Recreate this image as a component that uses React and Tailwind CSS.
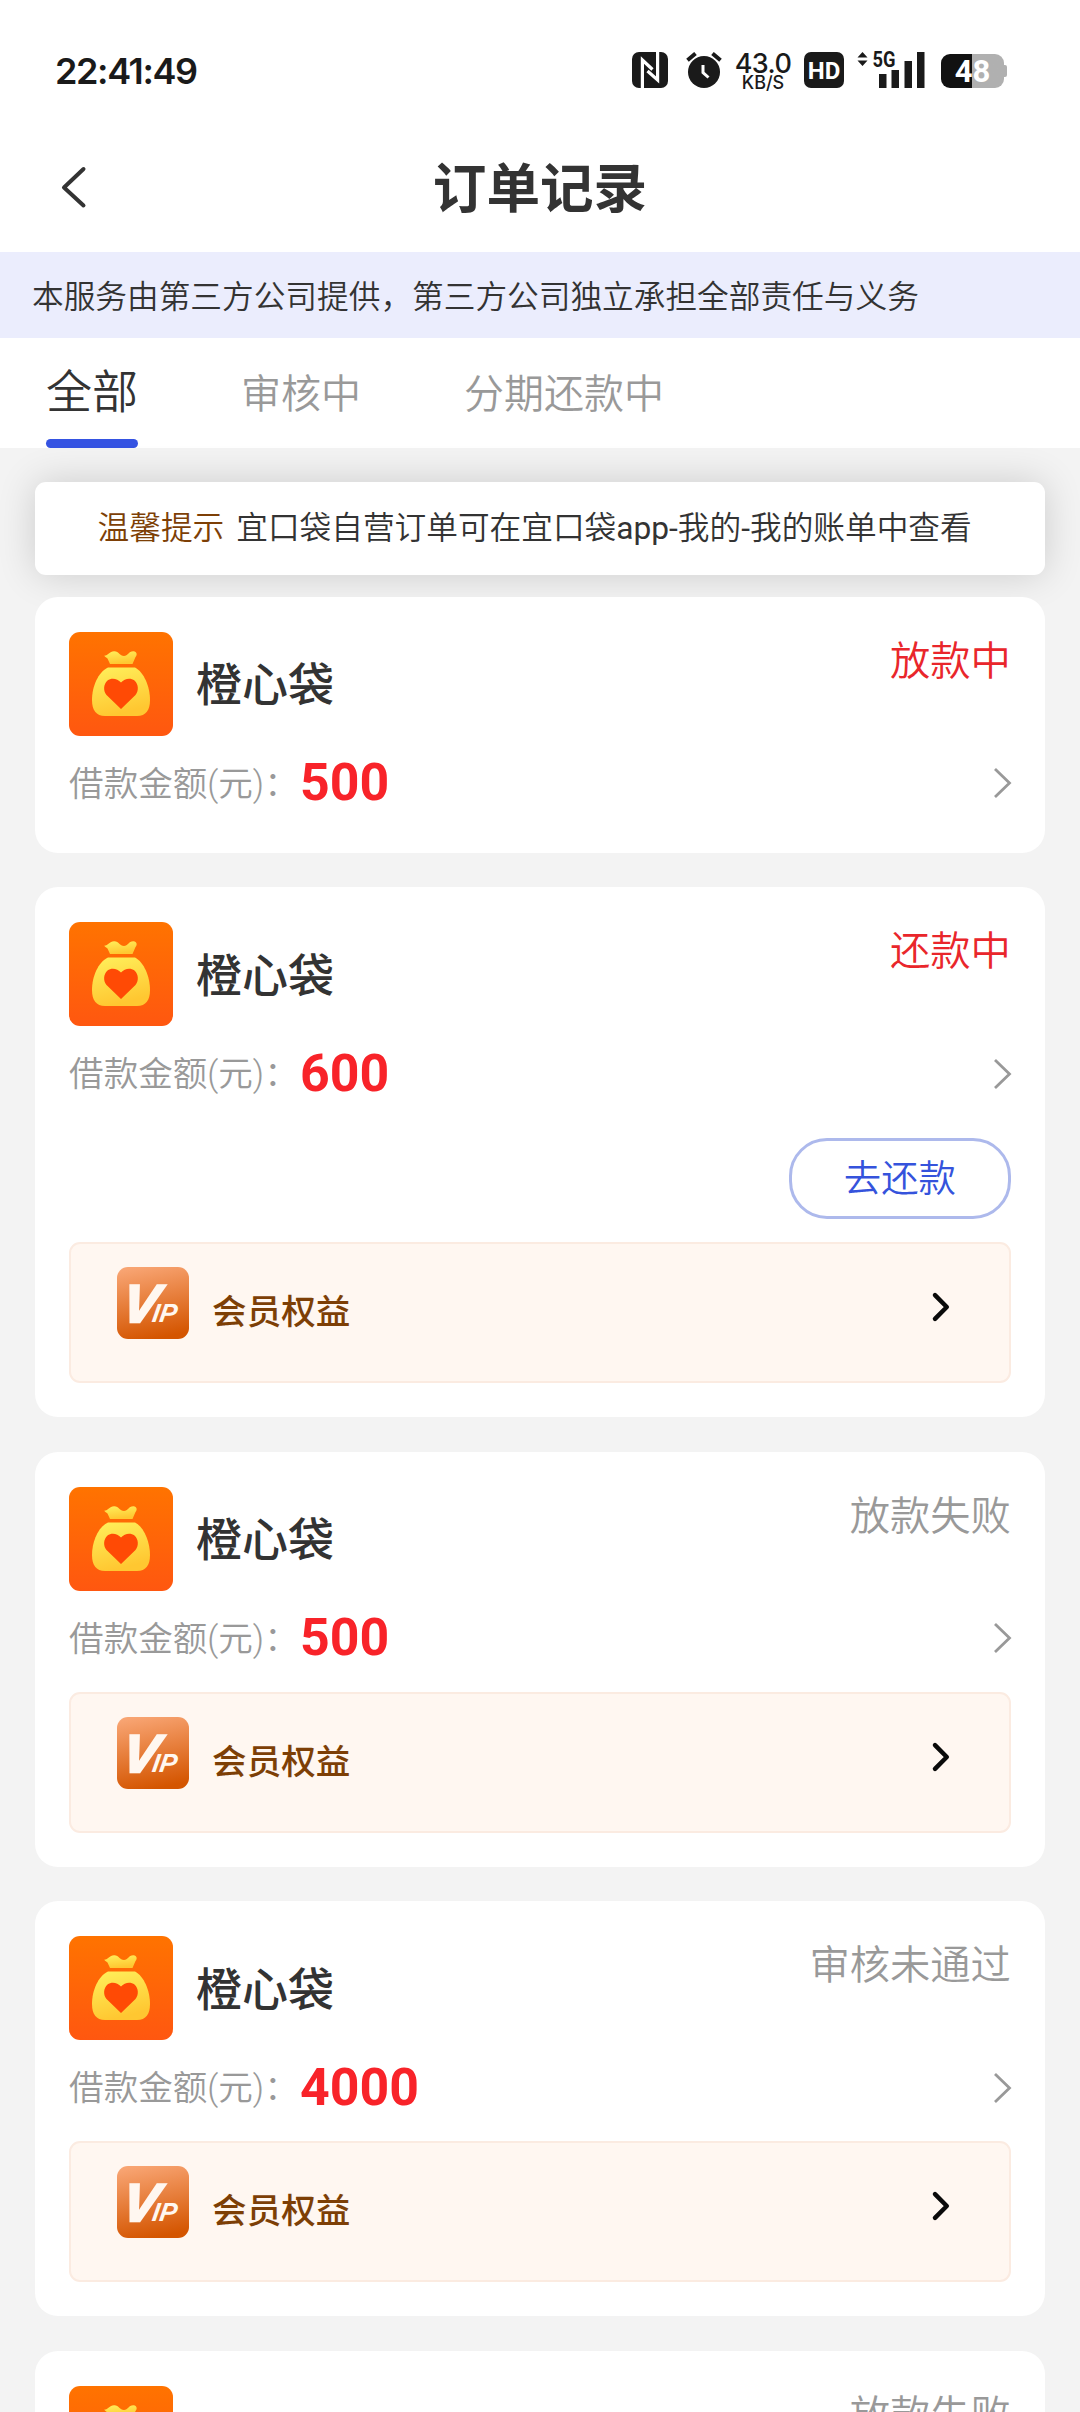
import clsx from "clsx";

const tabs = [
    { label: "全部", active: true },
    { label: "审核中" },
    { label: "分期还款中" },
];

const orders = [
    { id: 1, name: "橙心袋", amount: 500, status: "放款中", highlight: true },
    { id: 2, name: "橙心袋", amount: 600, status: "还款中", highlight: true, repay: true, vip: true },
    { id: 3, name: "橙心袋", amount: 500, status: "放款失败", vip: true },
    { id: 4, name: "橙心袋", amount: 4000, status: "审核未通过", vip: true },
    { id: 5, name: "橙心袋", amount: 500, status: "放款失败", vip: true },
];

function NfcIcon() {
    return (
        <svg width="36" height="36" viewBox="0 0 36 36" className="shrink-0">
            <rect width="36" height="36" rx="7" fill="#1a1a1a" />
            <path d="M10.4 36V8L20.5 17.5M25.6 0V28L15.5 19" fill="none" stroke="#fff" strokeWidth="3.2" />
        </svg>
    );
}

function AlarmIcon() {
    return (
        <svg width="36" height="36" viewBox="0 0 36 36" className="shrink-0">
            <circle cx="18" cy="20" r="16" fill="#1a1a1a" />
            <path d="M1.5 8.2L9.5 1.5M34.5 8.2L26.5 1.5" stroke="#1a1a1a" strokeWidth="4" />
            <path d="M17 13V20.5L22.5 25.5" fill="none" stroke="#fff" strokeWidth="3" />
        </svg>
    );
}

function SignalIcon() {
    return (
        <svg width="68" height="42" viewBox="0 -6 68 42" className="shrink-0">
            <path d="M0.5 5.5L5.5 0L10.5 5.5ZM0.5 8.5L5.5 14L10.5 8.5Z" fill="#1a1a1a" />
            <text x="15.5" y="15" fontSize="21.5" fontWeight="700" textLength="23" lengthAdjust="spacingAndGlyphs" fill="#1a1a1a" fontFamily="Roboto">5G</text>
            <path d="M22 22h7.5v14h-7.5zM34.5 18h7.5v18h-7.5zM47.5 9h7.5v27h-7.5zM60 0h7.5v36h-7.5z" fill="#1a1a1a" />
        </svg>
    );
}

function Battery() {
    return (
        <div className="flex items-center">
            <div className="flex h-[34px] w-[63px] items-center justify-center rounded-[9px] bg-linear-to-r from-[#111] from-50% to-[#b0b0b0] to-50%">
                <span className="text-[31px] leading-none font-bold text-white">48</span>
            </div>
            <div className="h-[12px] w-[3px] rounded-r-[2px] bg-[#b0b0b0]" />
        </div>
    );
}

function StatusBar() {
    return (
        <div className="flex h-[92px] items-end justify-between pr-[73px] pl-[55px] text-[#1a1a1a]">
            <span className="mb-[-1px] font-['Inter'] text-[36px] leading-[44px] font-semibold tracking-[-1.4px]">22:41:49</span>
            <div className="flex h-[40px] items-start">
                <NfcIcon />
                <div className="ml-[18px]"><AlarmIcon /></div>
                <div className="mt-[1px] ml-[13px] flex w-[56px] flex-col items-center font-['Inter'] font-medium">
                    <span className="text-[27px] leading-[22px] tracking-[-0.6px]">43.0</span>
                    <span className="text-[18px] leading-[15px]">KB/S</span>
                </div>
                <div className="ml-[13px] flex h-[36px] w-[40px] items-center justify-center rounded-[7px] bg-[#1a1a1a] pt-[2px]">
                    <span className="text-[24px] leading-none font-bold text-white">HD</span>
                </div>
                <div className="mt-[-6px] ml-[13px]"><SignalIcon /></div>
                <div className="mt-[2px] ml-[16px]"><Battery /></div>
            </div>
        </div>
    );
}

function Header() {
    return (
        <div className="grid h-[160px] grid-cols-[1fr_auto_1fr] items-center px-[60px]">
            <svg width="28" height="44" viewBox="0 0 28 44" fill="none" stroke="#333" strokeWidth="4" strokeLinecap="round" strokeLinejoin="round" className="mt-[30px]">
                <path d="M23.5 4L4 22.5L23.5 40.5" />
            </svg>
            <h1 className="mt-[36px] text-[53.6px] leading-none font-bold text-[#333]">订单记录</h1>
        </div>
    );
}

function Tabs() {
    return (
        <div className="flex h-[110px] gap-[103px] bg-white pl-[46px]">
            {tabs.map((tab) => (
                <div key={tab.label} className="flex flex-col justify-between">
                    <span className={clsx("flex h-[101px] items-center", tab.active ? "pt-[7px] text-[46px] text-[#333]" : "pt-[12px] text-[40px] text-[#999]")}>{tab.label}</span>
                    {tab.active && <div className="h-[9px] rounded-full bg-[#3553e2]" />}
                </div>
            ))}
        </div>
    );
}

function OrderLogo() {
    return (
        <svg width="104" height="104" viewBox="0 0 104 104" className="shrink-0">
            <defs>
                <linearGradient id="logoBg" x1="0" y1="0" x2="0" y2="1">
                    <stop offset="0" stopColor="#ff7300" />
                    <stop offset="1" stopColor="#ff5710" />
                </linearGradient>
                <linearGradient id="bag" x1="0" y1="0" x2="0.3" y2="1">
                    <stop offset="0" stopColor="#fff05c" />
                    <stop offset="1" stopColor="#ffc731" />
                </linearGradient>
            </defs>
            <rect width="104" height="104" rx="11" fill="url(#logoBg)" />
            <path d="M35.5 23.5C39 23.5 40.5 19.5 45 19.2C50 19 50.5 24 55 24C59 24 59.5 19 64.5 19.2C68 19.5 68.5 23 66.5 25L63.5 32H41L38.5 26.5C37.5 25.5 35 24.5 35.5 23.5Z" fill="url(#bag)" />
            <path d="M39 35.5H66C75 40 81 55 81 68C81 78 77 84 68 84H36C27 84 23 78 23 68C23 55 29 40 39 35.5Z" fill="url(#bag)" />
            <path d="M52 77L37.5 63C34 59 34.5 52 38.5 48.5C42.5 45.5 48.5 46.5 52 50.5C55.5 46.5 61.5 45.5 65.5 48.5C69.5 52 70 59 66.5 63Z" fill="#ff4a05" />
        </svg>
    );
}

function VipIcon() {
    return (
        <svg width="72" height="72" viewBox="0 0 72 72" className="shrink-0">
            <defs>
                <linearGradient id="vipBg" x1="0.3" y1="0" x2="0.5" y2="1">
                    <stop offset="0" stopColor="#f8a472" />
                    <stop offset="1" stopColor="#d45500" />
                </linearGradient>
            </defs>
            <rect width="72" height="72" rx="11" fill="url(#vipBg)" />
            <text transform="translate(3.5 54.5) skewX(-9)" fontSize="53" fontWeight="700" fontStyle="italic" fontFamily="Liberation Sans" fill="#fff7f0">
                <tspan stroke="#fff7f0" strokeWidth="2.5">V</tspan>
                <tspan dx="-4.5" fontSize="26">IP</tspan>
            </text>
        </svg>
    );
}

function VipBanner() {
    return (
        <div className="flex h-[141px] items-start rounded-[11px] border-2 border-[#fbebe1] bg-[#fff7f1] pt-[23px] pr-[58px] pl-[46px]">
            <VipIcon />
            <span className="mt-[21px] ml-[23px] text-[34.56px] leading-[48px] font-medium text-[#7d3f06]">会员权益</span>
            <svg width="20" height="32" viewBox="0 0 20 32" fill="none" stroke="#0a0a0a" strokeWidth="4.5" strokeLinecap="round" strokeLinejoin="round" className="mt-[24px] ml-auto">
                <path d="M4 4.2L15.8 16L4 27.8" />
            </svg>
        </div>
    );
}

function OrderCard({ order }) {
    return (
        <div className="rounded-[23px] bg-white px-[34.56px] pt-[35px] pb-[34px]">
            <div className="flex h-[104px] items-center">
                <OrderLogo />
                <span className="mt-[3px] ml-[23px] text-[46px] leading-none font-medium text-[#333]">{order.name}</span>
                <span className={clsx("mt-[8px] ml-auto self-start text-[40.3px] leading-[44px]", order.highlight ? "text-[#e9262b]" : "text-[#999]")}>{order.status}</span>
            </div>
            <div className={clsx("flex h-[95px] items-center", !order.vip && "mb-[-12px]")}>
                <span className="w-[231px] pt-[3px] text-[34.56px] whitespace-nowrap text-[#999]">借款金额(元)：</span>
                <span className="text-[51.84px] leading-none font-bold text-[#f82329]">{order.amount}</span>
                <svg width="20" height="32" viewBox="0 0 20 32" fill="none" stroke="#999" strokeWidth="2.8" className="mr-[-2px] ml-auto">
                    <path d="M2 2L16.5 16L2 30" />
                </svg>
            </div>
            {order.repay && (
                <div className="mt-[17px] mb-[23px] flex justify-end">
                    <button className="h-[81px] w-[222px] rounded-[38px] border-3 border-[#adb9ec] pt-[2px] text-[37.4px] leading-none font-[350] text-[#3553dc]">去还款</button>
                </div>
            )}
            {order.vip && <div className="mt-[6px]"><VipBanner /></div>}
        </div>
    );
}

export default function App() {
    return (
        <div className="h-[2412px] w-[1080px] overflow-hidden bg-[#f3f3f3] font-['Roboto','Noto_Sans_CJK_SC',sans-serif] font-[350]">
            <div className="bg-white">
                <StatusBar />
                <Header />
            </div>
            <div className="flex h-[86px] items-center bg-[#ebedfd] pt-[5px] pl-[32px] text-[31.68px] text-[#333]">
                本服务由第三方公司提供，第三方公司独立承担全部责任与义务
            </div>
            <Tabs />
            <div className="flex flex-col px-[34.56px] pt-[34px]">
                <div className="flex h-[93px] items-center rounded-[11px] bg-white pl-[63px] text-[31.68px] whitespace-nowrap text-[#333] shadow-[0_0_38px_rgba(0,0,0,0.16)]">
                    <span className="mr-[12px] text-[#7d3f06]">温馨提示</span>
                    <span>宜口袋自营订单可在宜口袋<span className="font-normal">app-</span>我的<span className="font-normal">-</span>我的账单中查看</span>
                </div>
                <div className="mt-[21.5px] flex flex-col gap-[34.6px]">
                    {orders.map((order) => <OrderCard key={order.id} order={order} />)}
                </div>
            </div>
        </div>
    );
}
